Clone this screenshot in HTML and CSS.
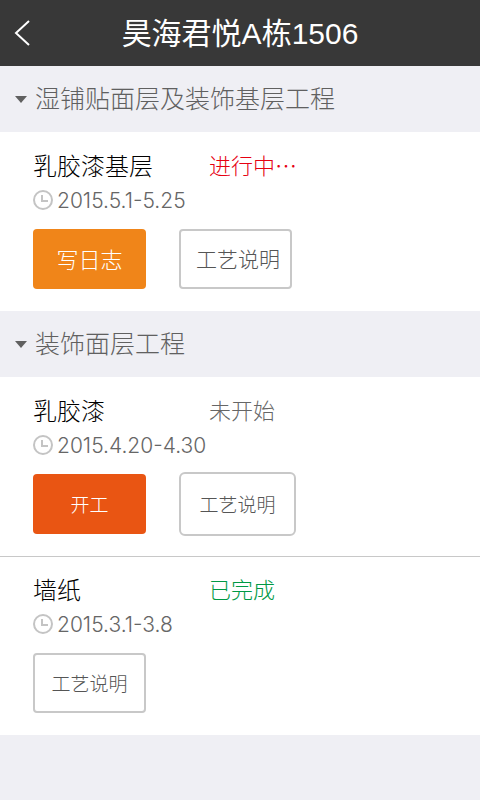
FILE: index.html
```html
<!DOCTYPE html>
<html lang="zh-CN">
<head>
<meta charset="utf-8">
<meta name="viewport" content="width=device-width, initial-scale=1">
<title>昊海君悦A栋1506</title>
<link rel="stylesheet" href="styles.css">
</head>
<body>
<header class="topbar">
  <button class="back" type="button" aria-label="返回"><svg width="16" height="26" viewBox="0 0 16 26"><path d="M15 1 2 13l13 12" fill="none" stroke="#fff" stroke-width="2"/></svg></button>
  <h1 class="title">昊海君悦A栋1506</h1>
</header>
<main>
  <section>
    <h2 class="group"><button type="button" class="toggle"><span class="caret"></span><span class="label">湿铺贴面层及装饰基层工程</span></button></h2>
    <article class="task">
      <div class="row"><h3 class="name">乳胶漆基层</h3><span class="status active">进行中⋯</span></div>
      <p class="date"><svg class="clock" width="20" height="20" viewBox="0 0 20 20"><circle cx="10" cy="10" r="9"/><path d="M9 5v6h6"/></svg>2015.5.1-5.25</p>
      <div class="actions"><button type="button" class="btn log">写日志</button><button type="button" class="btn wide-text">工艺说明</button></div>
    </article>
  </section>
  <section>
    <h2 class="group"><button type="button" class="toggle"><span class="caret"></span><span class="label">装饰面层工程</span></button></h2>
    <article class="task">
      <div class="row"><h3 class="name">乳胶漆</h3><span class="status">未开始</span></div>
      <p class="date"><svg class="clock" width="20" height="20" viewBox="0 0 20 20"><circle cx="10" cy="10" r="9"/><path d="M9 5v6h6"/></svg>2015.4.20-4.30</p>
      <div class="actions"><button type="button" class="btn start">开工</button><button type="button" class="btn large">工艺说明</button></div>
    </article>
    <article class="task">
      <div class="row"><h3 class="name">墙纸</h3><span class="status done">已完成</span></div>
      <p class="date"><svg class="clock" width="20" height="20" viewBox="0 0 20 20"><circle cx="10" cy="10" r="9"/><path d="M9 5v6h6"/></svg>2015.3.1-3.8</p>
      <div class="actions"><button type="button" class="btn">工艺说明</button></div>
    </article>
  </section>
</main>
</body>
</html>
```
FILE: styles.css
```css
* { box-sizing: border-box; }
body, h1, h2, h3, p { margin: 0; font-weight: 400; }
body { background: #efeff4; color: #000; font-family: "Noto Sans CJK SC", sans-serif; font-weight: 300; }
button { padding: 0; border: 0; background: none; color: inherit; font: inherit; }
.topbar { display: grid; grid-template-columns: 46px 1fr 46px; align-items: center; height: 66px; background: #383838; color: #fff; }
.back { display: flex; align-items: center; height: 66px; padding-left: 14px; }
.title { padding-top: 2px; font-family: "Liberation Sans", "Noto Sans CJK SC", sans-serif; font-size: 30px; line-height: 64px; text-align: center; white-space: nowrap; }
.group { font-size: 25px; font-weight: 300; }
.toggle { display: flex; align-items: center; gap: 8px; width: 100%; height: 66px; padding-left: 15px; color: #606060; }
.label { padding-bottom: 4px; }
.caret { border: 6px solid transparent; border-top: 7px solid #606060; border-bottom: 0; }
.task { padding: 14px 33px 20px; background: #fff; }
.task + .task { padding-top: 13px; border-top: 1px solid #c8c8c8; }
.row { display: grid; grid-template-columns: 176px 1fr; align-items: center; height: 36px; }
.name { font-size: 24px; font-weight: 300; }
.status { color: #666; font-size: 22px; }
.status.active { color: #e60012; }
.status.done { color: #009944; }
.date { display: flex; align-items: center; gap: 4px; height: 36px; color: #666; font-family: Inter, sans-serif; font-size: 21px; font-weight: 300; }
.clock { fill: none; stroke: #c4c4c4; stroke-width: 2; }
.actions { display: flex; align-items: center; gap: 33px; height: 64px; margin-top: 9px; }
.btn { width: 113px; height: 60px; border: 2px solid #c8c8c8; border-radius: 4px; color: #555; font-size: 19px; padding-bottom: 2px; }
.btn.wide-text { padding-left: 5px; font-size: 21px; }
.btn.large { width: 117px; height: 64px; border-radius: 6px; }
.btn.log { border: 0; background: #f08519; color: #fff; font-size: 22px; }
.btn.start { border: 0; background: #e95513; color: #fff; }
```
